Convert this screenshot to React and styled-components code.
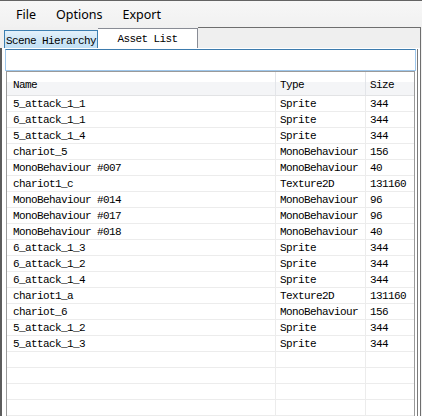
import React from 'react'
import styled, { createGlobalStyle } from 'styled-components'

const assets = [
  ['5_attack_1_1', 'Sprite', '344'],
  ['6_attack_1_1', 'Sprite', '344'],
  ['5_attack_1_4', 'Sprite', '344'],
  ['chariot_5', 'MonoBehaviour', '156'],
  ['MonoBehaviour #007', 'MonoBehaviour', '40'],
  ['chariot1_c', 'Texture2D', '131160'],
  ['MonoBehaviour #014', 'MonoBehaviour', '96'],
  ['MonoBehaviour #017', 'MonoBehaviour', '96'],
  ['MonoBehaviour #018', 'MonoBehaviour', '40'],
  ['6_attack_1_3', 'Sprite', '344'],
  ['6_attack_1_2', 'Sprite', '344'],
  ['6_attack_1_4', 'Sprite', '344'],
  ['chariot1_a', 'Texture2D', '131160'],
  ['chariot_6', 'MonoBehaviour', '156'],
  ['5_attack_1_2', 'Sprite', '344'],
  ['5_attack_1_3', 'Sprite', '344'],
]

const emptyRows = 5

const App = () => {
  return (
    <>
      <GlobalStyle />
      <Window>
        <MenuBar>
          <MenuItem>File</MenuItem>
          <MenuItem>Options</MenuItem>
          <MenuItem>Export</MenuItem>
        </MenuBar>

        <TabStrip>
          <Tab>Scene Hierarchy</Tab>
          <Tab $active>Asset List</Tab>
          <TabRest />
        </TabStrip>

        <Panel>
          <Inner>
            <SearchBox />
            <ListView>
              <HeaderRow>
                <HeaderCell $pad={6}>Name</HeaderCell>
                <HeaderCell $pad={4}>Type</HeaderCell>
                <HeaderCell $pad={4} $last>Size</HeaderCell>
              </HeaderRow>
              {assets.map(([name, type, size], i) => (
                <Row key={i}>
                  <Cell $pad={6}>{name}</Cell>
                  <Cell $pad={4}>{type}</Cell>
                  <Cell $pad={4} $last>{size}</Cell>
                </Row>
              ))}
              {Array.from({ length: emptyRows }).map((_, i) => (
                <Row key={'e' + i}>
                  <Cell $pad={6} />
                  <Cell $pad={4} />
                  <Cell $pad={4} $last />
                </Row>
              ))}
            </ListView>
          </Inner>
        </Panel>
      </Window>
    </>
  )
}

export default App

const GlobalStyle = createGlobalStyle`
  html, body {
    margin: 0;
    padding: 0;
    background: #f0f0f0;
  }
  * {
    box-sizing: border-box;
  }
`

const Window = styled.div`
  width: 422px;
  height: 416px;
  overflow: hidden;
  display: flex;
  flex-direction: column;
  background: #f0f0f0;
  border-top: 1px solid #646464;
`

const MenuBar = styled.div`
  flex-shrink: 0;
  height: 26px;
  display: flex;
  align-items: center;
  padding: 2px 0 0 6px;
  background: linear-gradient(#f7f7f7, #f1f1f1);
  font-family: 'Noto Sans', 'Open Sans', sans-serif;
  font-size: 12.5px;
  color: #000;
`

const MenuItem = styled.div`
  padding: 0 10px;
  line-height: 20px;
`

const mono = `
  font-family: 'Liberation Mono', 'DejaVu Sans Mono', monospace;
  font-size: 11px;
  letter-spacing: -0.6px;
  color: #000;
  white-space: pre;
`

const TabStrip = styled.div`
  flex-shrink: 0;
  height: 21px;
  display: flex;
  align-items: flex-end;
  padding-left: 4px;
  margin-right: 1px;
`

const Tab = styled.div`
  ${mono}
  display: flex;
  align-items: center;
  justify-content: center;
  height: ${p => (p.$active ? 20 : 18)}px;
  width: ${p => (p.$active ? 100 : 94)}px;
  padding-top: ${p => (p.$active ? 0 : 2)}px;
  border: 1px solid ${p => (p.$active ? '#898c95' : '#3c7fb1')};
  border-bottom: none;
  ${p => p.$active && 'border-left: none;'}
  background: ${p =>
    p.$active ? '#ffffff' : 'linear-gradient(#e3f1fb, #cde6f7 55%, #c2e0f5)'};
`

const TabRest = styled.div`
  flex: 1;
  align-self: stretch;
  border-top: 1px solid #6e6e6e;
  border-right: 1px solid #6e6e6e;
  background: #efefef;
`

const Panel = styled.div`
  flex: 1;
  min-height: 0;
  display: flex;
  flex-direction: column;
  margin-right: 1px;
  padding: 1px 2px 0 3px;
  background: #ffffff;
  border-left: 2px solid #5c5c5c;
  border-right: 1px solid #6e6e6e;
`

const Inner = styled.div`
  flex: 1;
  min-height: 0;
  display: flex;
  flex-direction: column;
  border-right: 1px solid #7a7a7a;
`

const SearchBox = styled.div`
  flex-shrink: 0;
  height: 22px;
  margin-right: 1px;
  background: #fff;
  border: 1px solid #9ec7ec;
  border-top-color: #3d7bad;
`

const ListView = styled.div`
  flex: 1;
  min-height: 0;
  overflow: hidden;
  margin: 0 2px 0 1px;
  border: 1px solid #9a9a9a;
  border-bottom: none;
  background: #fff;
`

const HeaderRow = styled.div`
  display: grid;
  grid-template-columns: 269px 90px 1fr;
  height: 24px;
  background: linear-gradient(#ffffff 0, #ffffff 42%, #f4f5f7 42%, #f4f5f7 100%);
  border-bottom: 1px solid #e2e3e5;
`

const HeaderCell = styled.div`
  ${mono}
  display: flex;
  align-items: center;
  padding-top: 3px;
  padding-left: ${p => p.$pad}px;
  border-right: ${p => (p.$last ? 'none' : '1px solid #e3e5e9')};
`

const Row = styled.div`
  display: grid;
  grid-template-columns: 269px 90px 1fr;
  height: 16px;
  border-bottom: 1px solid #ececec;
`

const Cell = styled.div`
  ${mono}
  line-height: 17px;
  padding-left: ${p => p.$pad}px;
  overflow: hidden;
  border-right: ${p => (p.$last ? 'none' : '1px solid #ececec')};
`
